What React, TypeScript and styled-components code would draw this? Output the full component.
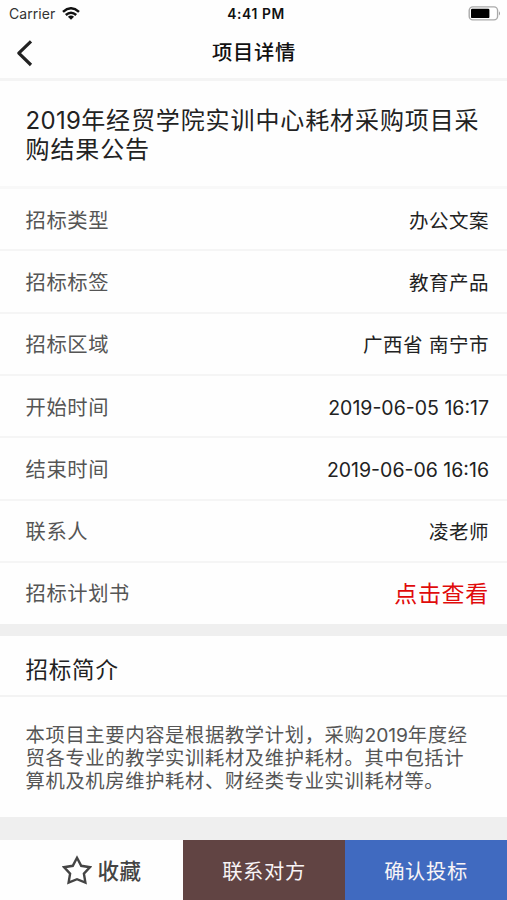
import React from 'react';
import styled, { createGlobalStyle } from 'styled-components';

const GlobalStyle = createGlobalStyle`
  * { box-sizing: border-box; }
  body {
    margin: 0;
    background: #fff;
    font-family: Inter, "Noto Sans CJK SC", sans-serif;
    color: #222;
  }
`;

const Screen = styled.div`
  display: flex;
  flex-direction: column;
  width: 507px;
  height: 900px;
  overflow: hidden;
  background: #fefefe;
`;

const StatusBar = styled.div`
  display: grid;
  grid-template-columns: 1fr auto 1fr;
  align-items: center;
  height: 27px;
  padding: 0 6px 0 9px;
  line-height: 16px;
`;

const Carrier = styled.div`
  display: flex;
  align-items: center;
  gap: 7px;
  font-size: 14px;
  letter-spacing: 0.05px;
  color: #333;
`;

const Clock = styled.div`
  padding-left: 2px;
  font-size: 13.8px;
  font-weight: 600;
  letter-spacing: 0.6px;
  color: #111;
`;

const BatterySlot = styled.div`
  display: flex;
  justify-content: flex-end;
`;

const NavBar = styled.header`
  display: grid;
  grid-template-columns: 60px 1fr 60px;
  align-items: center;
  height: 54px;
  border-bottom: 3px solid #f4f4f4;
`;

const BackButton = styled.button`
  display: flex;
  padding: 0 0 0 15px;
  border: 0;
  background: none;
`;

const NavTitle = styled.h1`
  margin: 0;
  padding: 1px 0 0 1px;
  text-align: center;
  font-size: 20.3px;
  line-height: 28px;
  font-weight: 500;
  letter-spacing: 0.7px;
  color: #111;
`;

const ProjectTitle = styled.h2`
  margin: 0;
  height: 108px;
  padding: 24.5px 20px 0 25.5px;
  border-bottom: 3px solid #f8f8f8;
  font-size: 24px;
  line-height: 29px;
  font-weight: 400;
  letter-spacing: 0.9px;
`;

const Digits = styled.span<{ $spacing: number }>`
  letter-spacing: ${({ $spacing }) => $spacing}px;
`;

const Rows = styled.dl`
  display: grid;
  grid-template-rows: repeat(6, 62.35px) 1fr;
  height: 435px;
  margin: 0;
`;

const Row = styled.div`
  display: flex;
  align-items: center;
  justify-content: space-between;
  padding: 3px 18px 0 25.5px;
  line-height: 30px;
  border-bottom: 2px solid #f5f5f5;

  &:last-child { border-bottom-color: transparent; }
`;

const Label = styled.dt`
  font-size: 20.3px;
  letter-spacing: 0.6px;
  color: #555;
`;

const Value = styled.dd<{ $kind: 'text' | 'date' | 'link' }>`
  margin: 0;
  font-size: ${({ $kind }) => ({ text: 19.5, date: 19.5, link: 23 })[$kind]}px;
  letter-spacing: ${({ $kind }) => ({ text: 0.5, date: 0, link: 0.7 })[$kind]}px;
  color: ${({ $kind }) => ($kind === 'link' ? '#e00b0b' : '#222')};
`;

const Gap = styled.div<{ $height: number }>`
  height: ${({ $height }) => $height}px;
  background: #efefef;
`;

const SectionTitle = styled.h3`
  display: flex;
  align-items: center;
  height: 61px;
  margin: 0;
  padding: 4px 25.5px 0;
  border-bottom: 2px solid #f3f3f3;
  font-size: 22.5px;
  font-weight: 400;
  letter-spacing: 0.8px;
`;

const Description = styled.p`
  height: 120px;
  margin: 0;
  padding: 26.5px 20px 0 25.5px;
  font-size: 19.3px;
  line-height: 23.3px;
  letter-spacing: 0.66px;
  white-space: nowrap;
  color: #555;
`;

const Footer = styled.footer`
  display: grid;
  grid-template-columns: 183px 162px 162px;
  height: 60px;
`;

const Action = styled.button<{ $fill?: string }>`
  display: flex;
  align-items: center;
  justify-content: center;
  gap: 5px;
  padding: 0;
  border: 0;
  background: ${({ $fill }) => $fill ?? '#fefefe'};
  color: ${({ $fill }) => ($fill ? '#f8f4f6' : '#444')};
  font-family: inherit;
  font-size: 20.3px;
  font-weight: ${({ $fill }) => ($fill ? 400 : 500)};
  letter-spacing: 0.6px;
`;

const FavoriteAction = styled(Action)`
  gap: 5px;
  padding: 0 0 1px 21px;
  font-size: 21.5px;
`;

const WifiIcon = () => (
  <svg width="18" height="14" viewBox="0 0 18 14" fill="none" stroke="#111" strokeWidth="2.5">
    <path d="M1 4.9Q9-2.3 17 4.9" />
    <path d="M3.8 8Q9 3.5 14.2 8" />
    <path d="M9 12.8 5.9 9.7Q9 7.2 12.1 9.7Z" fill="#111" stroke="none" />
  </svg>
);

const BatteryIcon = () => (
  <svg width="33" height="15" viewBox="0 0 33 15">
    <rect x="1.2" y="0.9" width="28.4" height="13" rx="3.6" fill="#fff" stroke="#aaa" strokeWidth="1.4" />
    <rect x="3" y="2.7" width="18.4" height="9.4" rx="1.2" fill="#000" />
    <path d="M31 5.2Q33 7.4 31 9.6Z" fill="#999" />
  </svg>
);

const BackIcon = () => (
  <svg width="18" height="28" viewBox="0 0 18 28" fill="none" stroke="#222" strokeWidth="3.2" strokeLinejoin="round">
    <path d="M16 2.4 3.8 14.2 16 26" />
  </svg>
);

const StarIcon = () => (
  <svg width="30" height="30" viewBox="0 0 30 30" fill="none" stroke="#444" strokeWidth="2.4" strokeLinejoin="miter">
    <path d="M15 2.8 19.2 10.8 28 12.2 21.9 18.6 23.4 27.6 15 24.2 6.6 27.6 8.1 18.6 2 12.2 10.8 10.8Z" />
  </svg>
);

type Detail = { label: string; value: string; kind: 'text' | 'date' | 'link' };

const details: Detail[] = [
  { label: '招标类型', value: '办公文案', kind: 'text' },
  { label: '招标标签', value: '教育产品', kind: 'text' },
  { label: '招标区域', value: '广西省 南宁市', kind: 'text' },
  { label: '开始时间', value: '2019-06-05 16:17', kind: 'date' },
  { label: '结束时间', value: '2019-06-06 16:16', kind: 'date' },
  { label: '联系人', value: '凌老师', kind: 'text' },
  { label: '招标计划书', value: '点击查看', kind: 'link' },
];

export default function App() {
  return (
    <>
      <GlobalStyle />
      <Screen lang="zh-CN">
        <StatusBar>
          <Carrier>Carrier <WifiIcon /></Carrier>
          <Clock>4:41 PM</Clock>
          <BatterySlot><BatteryIcon /></BatterySlot>
        </StatusBar>
        <NavBar>
          <BackButton aria-label="返回"><BackIcon /></BackButton>
          <NavTitle>项目详情</NavTitle>
        </NavBar>
        <ProjectTitle>
          <Digits $spacing={0.3}>2019</Digits>年经贸学院实训中心耗材采购项目采<br />购结果公告
        </ProjectTitle>
        <Rows>
          {details.map(({ label, value, kind }) => (
            <Row key={label}>
              <Label>{label}</Label>
              <Value $kind={kind}>{value}</Value>
            </Row>
          ))}
        </Rows>
        <Gap $height={12} />
        <SectionTitle>招标简介</SectionTitle>
        <Description>
          本项目主要内容是根据教学计划，采购<Digits $spacing={-0.1}>2019</Digits>年度经<br />
          贸各专业的教学实训耗材及维护耗材。其中包括计<br />
          算机及机房维护耗材、财经类专业实训耗材等。
        </Description>
        <Gap $height={23} />
        <Footer>
          <FavoriteAction><StarIcon />收藏</FavoriteAction>
          <Action $fill="#614443">联系对方</Action>
          <Action $fill="#406ac0">确认投标</Action>
        </Footer>
      </Screen>
    </>
  );
}
